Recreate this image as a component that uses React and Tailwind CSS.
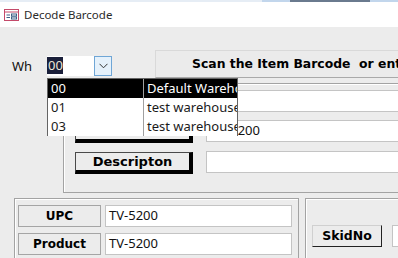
import React from 'react';

const sans = { fontFamily: '"Noto Sans", "Open Sans", sans-serif' };
const bold = { fontFamily: '"DejaVu Sans", Verdana, sans-serif' };

const warehouses = [
  { code: '00', name: 'Default Warehouse' },
  { code: '01', name: 'test warehouse 1' },
  { code: '03', name: 'test warehouse 3' },
];

function FormIcon() {
  return (
    <svg width="15" height="12" viewBox="0 0 15 12">
      <rect x="0.5" y="0.5" width="14" height="11" fill="#fff" stroke="#c44a6a" />
      <line x1="0.5" y1="3" x2="14.5" y2="3" stroke="#c44a6a" />
      <line x1="2.5" y1="6" x2="6" y2="6" stroke="#3f5f86" />
      <line x1="2.5" y1="8.5" x2="6" y2="8.5" stroke="#3f5f86" />
      <rect x="7.5" y="5" width="5" height="2" fill="none" stroke="#3f5f86" />
      <rect x="7.5" y="8" width="5" height="2" fill="none" stroke="#3f5f86" />
    </svg>
  );
}

function ShadowButton({ label }) {
  return (
    <div
      className="flex h-[22px] w-[118px] shrink-0 items-center justify-center border-t border-l border-[#4a4a4a] border-r-4 border-b-4 border-r-black border-b-black bg-[#ececec] text-[13px] font-bold text-black"
      style={bold}
    >
      {label}
    </div>
  );
}

function Field({ value, className = '' }) {
  return (
    <div
      className={`flex h-[22px] items-center border border-[#c4c4c4] bg-white pl-[3px] text-[13px] text-[#111] ${className}`}
      style={sans}
    >
      {value}
    </div>
  );
}

export default function App() {
  return (
    <div className="relative flex h-[258px] w-[398px] flex-col overflow-hidden bg-[#ececec]" style={sans}>
      {/* strip of the window behind */}
      <div className="flex h-[2px] shrink-0">
        <div className="w-[262px] bg-[#e6edf5]" />
        <div className="w-[28px] bg-[#c2d6ec]" />
        <div className="w-[80px] bg-[#6a7a8e]" />
        <div className="flex-1 bg-[#c2d6ec]" />
      </div>

      {/* Title bar */}
      <div className="flex h-[25px] shrink-0 items-center bg-white pl-[4px]">
        <FormIcon />
        <span className="ml-[5px] text-[11.5px] leading-none text-[#2b2b2b]">Decode Barcode</span>
      </div>

      {/* Warehouse row */}
      <div className="mt-[23px] flex h-[28px] shrink-0">
        <span className="ml-[12px] mt-[7px] w-[35px] shrink-0 text-[13px] leading-[18px] text-[#111]">Wh</span>
        <div className="mt-[6px] flex h-[20px] w-[65px] shrink-0 bg-white">
          <div className="mt-[1px] flex h-[17px] w-[16px] items-center bg-[#1a1f3a] pl-[1px] text-[13px] leading-none text-[#efe6d6]">
            00
          </div>
          <div className="ml-auto flex h-[20px] w-[18px] items-center justify-center border border-[#6fa6d6] bg-[#e5f1fb]">
            <svg width="9" height="6" viewBox="0 0 9 6">
              <path d="M0.5 0.8 L4.5 4.8 L8.5 0.8" fill="none" stroke="#333" strokeWidth="1" />
            </svg>
          </div>
        </div>
        <div
          className="ml-[43px] flex h-[28px] w-[260px] shrink-0 items-center whitespace-pre border-t border-l border-[#d9d9d9] border-b border-b-[#a9a9a9] bg-[#ebebeb] pl-[36px] text-[12.4px] font-bold text-black"
          style={bold}
        >
          {'Scan the Item Barcode  or enter the UPC'}
        </div>
      </div>

      {/* Upper frame */}
      <div className="ml-[63px] mt-[5px] h-[110px] w-[345px] shrink-0 border border-[#a3a3a3] pl-[11px] pt-[6px] shadow-[inset_1px_1px_0_#fff]">
        <div className="flex h-[22px]">
          <ShadowButton label="Warehouse" />
          <Field value="" className="ml-[13px] flex-1" />
        </div>
        <div className="mt-[8px] flex h-[23px]">
          <div className="mt-[1px]">
            <ShadowButton label="UPC" />
          </div>
          <Field value="TV-5200" className="ml-[13px] flex-1 pl-[4px]" />
        </div>
        <div className="mt-[8px] flex h-[23px]">
          <div className="mt-[1px]">
            <ShadowButton label="Descripton" />
          </div>
          <Field value="" className="ml-[13px] flex-1" />
        </div>
      </div>

      {/* Lower frames */}
      <div className="mt-[5px] flex flex-1">
        <div className="ml-[14px] w-[285px] shrink-0 border border-b-0 border-[#a3a3a3] pl-[3px] pt-[6px] shadow-[inset_1px_1px_0_#fff]">
          <div className="flex h-[22px]">
            <div
              className="flex h-[22px] w-[83px] items-center justify-center border border-[#a5a5a5] bg-[#ececec] text-[12px] font-bold text-black"
              style={bold}
            >
              UPC
            </div>
            <Field value="TV-5200" className="ml-[4px] w-[187px]" />
          </div>
          <div className="mt-[6px] flex h-[22px]">
            <div
              className="flex h-[22px] w-[83px] items-center justify-center border border-[#a5a5a5] bg-[#ececec] text-[12px] font-bold text-black"
              style={bold}
            >
              Product
            </div>
            <Field value="TV-5200" className="ml-[4px] w-[187px]" />
          </div>
        </div>
        <div className="ml-[6px] flex flex-1 items-start border-t border-l border-[#a3a3a3] pl-[6px] pt-[26px] shadow-[inset_1px_1px_0_#fff]">
          <div
            className="flex h-[22px] w-[70px] shrink-0 items-center justify-center border border-[#d0d0d0] border-r-[#222] border-b-[#222] bg-[#ececec] text-[12.5px] font-bold text-black"
            style={bold}
          >
            SkidNo
          </div>
          <Field value="" className="ml-[10px] w-[40px] shrink-0" />
        </div>
      </div>

      {/* Open warehouse list */}
      <div className="absolute left-[47px] top-[78px] h-[58px] w-[191px] border border-[#646464] bg-white">
        {warehouses.map((w, i) => (
          <div
            key={w.code}
            className={`flex h-[19px] items-center text-[13px] leading-none ${
              i === 0 ? 'bg-black text-white' : 'bg-white text-[#1a1a1a]'
            }`}
          >
            <span className="h-[19px] w-[96px] shrink-0 border-r border-[#a0a0a0] pl-[3px] leading-[19px]">{w.code}</span>
            <span className="overflow-hidden whitespace-nowrap pl-[3px] leading-[19px]">{w.name}</span>
          </div>
        ))}
      </div>
    </div>
  );
}
